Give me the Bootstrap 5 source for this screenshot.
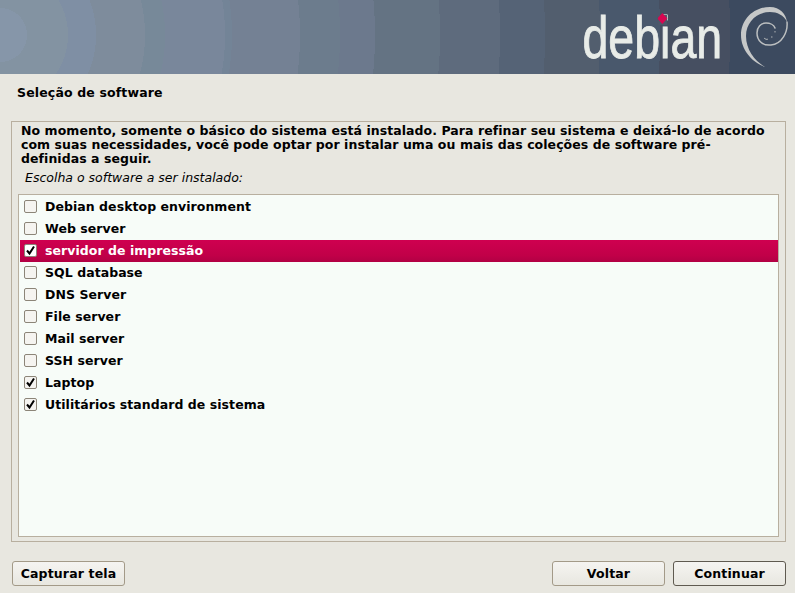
<!DOCTYPE html>
<html lang="pt"><head><meta charset="utf-8"><title>Debian</title>
<link href="https://cdn.jsdelivr.net/npm/bootstrap@5.3.0/dist/css/bootstrap.min.css" rel="stylesheet">
<style>
html,body{height:593px;overflow:hidden}
body{background:#e8e7e0;font-family:"DejaVu Sans",sans-serif;font-size:12.5px;color:#000;line-height:1}
.banner{height:74px;overflow:hidden;background:radial-gradient(circle 800px at 0 35px,#8696a9 0 27px,#8393a2 27px 68px,#7f8fa4 68px 96px,#7e8c9c 96px 145px,#778999 145px 165px,#79879b 165px 225px,#738497 225px 232px,#748194 232px 300px,#6c7c8d 300px 340px,#6c798d 340px 375px,#647383 375px 440px,#5e6b7d 440px 500px,#556376 500px 545px,#525e6e 545px 600px,#49586c 600px 660px,#464f61 660px 730px,#3c4a5f 730px)}
.wordmark{font-family:"Liberation Sans",sans-serif;font-size:60px;color:#e8ece8;line-height:74px;-webkit-text-stroke:.9px #e8ece8;transform:scaleX(.775);transform-origin:right center;margin-right:16px;position:relative;width:180px;margin-top:2px}
.patch{position:absolute;width:12px;height:10px;background:#4d5869;left:97px;top:14px}
.dot{position:absolute;width:13px;height:11px;background:#d70751;clip-path:polygon(50% 0,100% 50%,50% 100%,0 50%);left:96.500px;top:12px}
.swirl{margin-right:5px;flex:none}
.heading{padding:11px 17px 0;height:47px;font-weight:700;line-height:16px;letter-spacing:.15px}
.frame{margin:0 9px 0 11px;height:421px;border:1px solid #b8af9f;padding:2px 6px 3px 6px}
.intro{font-weight:700;line-height:14px;margin:0 10px 0 3px;letter-spacing:.06px}
.prompt{font-style:italic;margin:5px 0 9px 7px;line-height:14px}
.pick{height:343px;background:#f7fcf8;border:1px solid #b8af9f;padding:1px 0 1px 1px}
.row-item{height:22px;font-weight:700;display:flex;align-items:center;padding:0 0 0 4px;letter-spacing:.05px}
.row-item.sel{background:linear-gradient(#cf0050,#c10048 70%,#b20044);color:#fff}
.tick{width:13px;height:13px;border:1px solid #8c8578;border-radius:2px;background:#f5f4f0;margin:-1px 8px 0 0;flex:none;display:block}
.sel .tick{background:#fff}
.gbtn{height:25px;border:1px solid #a39a88;border-radius:3px;background:linear-gradient(#f5f4f1,#e8e7e0);font-weight:700;font-size:12.5px;letter-spacing:.15px;color:#000;padding:0;text-align:center;line-height:22px}
.gbtn:hover{background:#f5f4f1;border-color:#a39a88;color:#000}
.w-cap{width:113px}.w-nav{width:113px}
.gbtn.def{border-color:#5f5a50}
.foot{padding:19px 9px 0 12px}
</style></head><body>
<div class="banner d-flex justify-content-end align-items-center">
<div class="wordmark">debian<span class="patch"></span><span class="dot"></span></div>
<svg class="swirl" width="52" height="64" viewBox="738 5 52 64" fill="none">
<path d="M765 67C752 62 741 50 741 35 741 20 753 7 770 7 780 7 786 14 787 22 784 15 777 12 770 12 757 12 746 22 746 36 746 50 755 61 765 67Z" fill="#c6c8c8"/>
<path d="M787 22C788 32 782 44 771 45 762 46 757 40 757 33 757 27 761 23 766 23 770 23 774 25 775 28" stroke="#bcbfc0" stroke-width="1.5" stroke-linecap="round"/>
<path d="M775 31v1.500M771 37h1.500M764 38c1 1 3 2 4 1" stroke="#aeb2b5" stroke-width="1"/>
</svg>
</div>
<div class="heading">Seleção de software</div>
<div class="frame">
<div class="intro">No momento, somente o básico do sistema está instalado. Para refinar seu sistema e deixá-lo de acordo com suas necessidades, você pode optar por instalar uma ou mais das coleções de software pré-definidas a seguir.</div>
<div class="prompt">Escolha o software a ser instalado:</div>
<div class="pick">
<div class="row-item"><span class="tick"></span>Debian desktop environment</div>
<div class="row-item"><span class="tick"></span>Web server</div>
<div class="row-item sel"><svg class="tick" viewBox="0 0 11 11"><path d="M2 5.500 4.500 8.500 9 1.500" fill="none" stroke="#000" stroke-width="2"/></svg>servidor de impressão</div>
<div class="row-item"><span class="tick"></span>SQL database</div>
<div class="row-item"><span class="tick"></span>DNS Server</div>
<div class="row-item"><span class="tick"></span>File server</div>
<div class="row-item"><span class="tick"></span>Mail server</div>
<div class="row-item"><span class="tick"></span>SSH server</div>
<div class="row-item"><svg class="tick" viewBox="0 0 11 11"><path d="M2 5.500 4.500 8.500 9 1.500" fill="none" stroke="#000" stroke-width="2"/></svg>Laptop</div>
<div class="row-item"><svg class="tick" viewBox="0 0 11 11"><path d="M2 5.500 4.500 8.500 9 1.500" fill="none" stroke="#000" stroke-width="2"/></svg>Utilitários standard de sistema</div>
</div>
</div>
<div class="foot d-flex">
<button class="btn gbtn w-cap" type="button">Capturar tela</button>
<button class="btn gbtn w-nav ms-auto" type="button">Voltar</button>
<button class="btn gbtn w-nav def ms-2" type="button">Continuar</button>
</div>
</body></html>
